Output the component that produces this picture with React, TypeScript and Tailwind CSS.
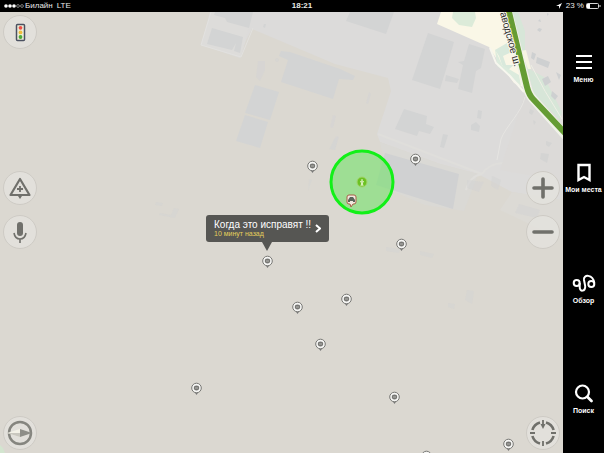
import type { ReactNode } from "react";

const font = "font-['Liberation_Sans',Arial,sans-serif]";

const pins = [
  [312, 166], [415, 159], [401, 244], [267, 261], [297, 307], [346, 299],
  [320, 344], [196, 388], [394, 397], [508, 444], [426, 456],
];

function MapCanvas() {
  return (
    <svg className="absolute inset-0 h-full w-full" aria-hidden="true">
      <g transform="translate(0 -12)">
        <rect x="0" y="12" width="100%" height="100%" fill="#dbd8d1" />
        <path d="M0 445Q5 449 5 456H0Z" fill="#d3e5cf" />

        {/* industrial zones */}
        <path d="M210 12H563V206L535 196L512 192L478 174L440 164L380 142L377 134L391 91L388 78L335 64L252 29L246 40L240 58L201 45Z" fill="#dcdbda" />
        <path d="M201 45L211 12H253L241 57Z" fill="#dddcda" />
        <path d="M201 45L211 12M201 45L241 57L253 28" stroke="#e2e1df" fill="none" />
        <path d="M380 142L440 164L478 174L464 211L425 205L390 190Z" fill="#dad9d5" />
        <path d="M378 134L482 174M482 174Q470 176 466 190M482 174Q488 164 503 163" stroke="#dfdedb" strokeWidth="2" fill="none" />
        <path d="M512 192L563 200V240L500 210Z" fill="#dcdad5" />

        {/* buildings */}
        <g fill="#d3d4d4">
          <path d="M215 12H253L249 28L227 22L225 18L214 15Z" />
          <path d="M212 28L243 37L240 53L234 51L236 43L232 50L207 44Z" />
          <path d="M350 12H394L386 34L346 21Z" />
          <path d="M281 51L290 52L340 69L355 76L353 80L339 79L333 99L281 82L288 60L279 56Z" />
          <path d="M255 85L279 92L270 120L245 113Z" />
          <path d="M245 115L268 122L260 148L236 141Z" />
          <path d="M258 61L265 61L265 70L260 81L256 77Z" opacity=".6" />
          <circle cx="277" cy="60" r="2" opacity=".5" />
          <path d="M264 24L266 24L265 28L263 27Z" />
          <path d="M369 92L371 94L368 104L366 103ZM333 115L336 116L333 128L330 127ZM336 136L339 137L335 150L330 149Z" opacity=".6" />
          <path d="M428 33L454 42L448 63L440 89L412 80Z" />
          <path d="M446 75L459 79L457 83L445 81Z" />
          <path d="M469 44L485 49L481 68L476 71L472 93L458 89L463 65L458 62L464 61Z" />
          <path d="M404 109L427 116L426 124L434 127L430 134L419 131L417 136L395 129Z" />
          <path d="M443 134L448 135L444 148L440 147ZM478 110L482 111L481 119L477 118ZM471 125L476 122L480 126L479 132L471 130Z" />
          <path d="M385 153L459 174L453 209L376 185Z" fill="#d0d1d2" />
          <path d="M334 139L338 137L335 150L329 149ZM309 179L312 180L308 191Z" opacity=".4" />
          <path d="M467 180L484 182L479 192L467 188ZM492 176L501 180L498 190L491 186ZM519 204L540 210L537 218L515 213Z" opacity=".55" />
          <path d="M386 247L400 249L399 253L386 251ZM420 251L434 254L432 258L420 255ZM467 290L474 291L472 304L465 300ZM448 303L455 304L454 309L448 307Z" opacity=".5" />
          <path d="M156 202L163 203L162 206L155 205ZM160 213L171 215L174 208L179 209L175 218L159 215Z" opacity=".5" />
        </g>

        {/* open land and housing on the upper right */}
        <path d="M515 12H563V133L530 93Z" fill="#e2dfdc" />
        <path d="M525 93L563 135V181L500 170Z" fill="#dcdad8" />
        <path d="M441 12H508L520 61L525 88L514 83L496 58L489 47L437 24Z" fill="#faf7e7" />
        <path d="M453 12H475L476 18L472 27L459 25L452 18Z" fill="#dcebd9" />
        <path d="M495 50L507 43L515 64L508 70L502 65L499 56Z" fill="#d9e9dc" />
        <path d="M503 56L514 51L518 65L506 65Z" fill="#f9f6e6" />
        <path d="M495 49L497 66L512 78L521 86L519 75L502 65Z" fill="#dcebdd" />
        <path d="M512 12H518L525 31L525 51L531 70L544 77L562 112L560 120L534 94Z" fill="#d7e6d8" />
        <path d="M521 51L526 50L531 69L528 69Z" fill="#f7f4e3" />
        <path d="M490 48L496 63L510 76L524 92" fill="none" stroke="#f7f6ee" strokeWidth="2" />
        <path d="M525 97C522 112 506 126 501 139L497 160" fill="none" stroke="#e6e5e2" />
        <path d="M531 65Q544 91 562 119" fill="none" stroke="#eeefe5" />
        <g fill="#ced0d1">
          <path d="M537 57L550 62L548 68L536 63ZM542 79L548 76L551 82L545 86ZM552 91L558 96L555 100L551 96ZM532 52L536 54L534 60L531 58ZM556 72L561 75L559 80ZM539 28L542 29L540 32L537 30ZM547 13L549 14L547 16ZM540 19L541 22L538 21Z" />
          <path d="M530 109L534 111L532 115L529 113ZM546 141L552 143L549 147L546 145ZM541 153L549 154L547 163L540 159ZM533 120L536 122L534 125Z" opacity=".6" />
        </g>
        <path d="M507 8L527 87Q529 95 533 99L566 136" fill="none" stroke="#f0f2e8" strokeWidth="9" />
        <path d="M508 8L527 87Q529 95 533 99L566 134" fill="none" stroke="#659c34" strokeWidth="6" />
        <text
          transform="translate(500 13) rotate(75)"
          className={`${font} text-[10px]`}
          fill="#2b2b2b"
          stroke="#f7f6ed"
          strokeWidth="2"
          paintOrder="stroke"
        >
          аводское ш.
        </text>

        {/* accuracy area */}
        <circle cx="362" cy="182" r="31" fill="#6ee264" fillOpacity=".56" stroke="#12f018" strokeWidth="3" />
        <circle cx="362" cy="182" r="5" fill="#6bc222" stroke="#a2d46d" />
        <path d="M362 179V181M360 182L362 181L364 182M361 186L362 182L363 186" fill="none" stroke="#e8f5cf" />
        <path d="M349 195H354Q356 195 356 197V202Q356 204 354 204H353L351 207L350 204H349Q347 204 347 202V197Q347 195 349 195Z" fill="#f1e9df" stroke="#a85f48" />
        <path d="M348 202V200L350 197H353L355 200V202H353V201H350V202Z" fill="#59655b" />

        {pins.map(([x, y]) => (
          <g key={`${x}-${y}`} transform={`translate(${x + 0.5} ${y})`}>
            <path d="M-2 4L0 7L2 4" fill="#777" />
            <circle r="4.8" fill="#f6f6f4" stroke="#777774" />
            <ellipse rx="2.7" ry="2.4" fill="#777774" />
            <path d="M-1.5 0H1.5" stroke="#c5c5c2" strokeWidth=".8" />
          </g>
        ))}
      </g>
    </svg>
  );
}

function RoundButton({ label, children }: { label: string; children: ReactNode }) {
  return (
    <button
      type="button"
      aria-label={label}
      className="flex h-[34px] w-[34px] shrink-0 items-center justify-center rounded-full border border-[#cecbc5] bg-[#e3e2dd]/80 text-[#70706b]"
    >
      <svg width="30" height="30" viewBox="-15 -15 30 30" fill="none" stroke="currentColor" aria-hidden="true">
        {children}
      </svg>
    </button>
  );
}

function LeftControls() {
  return (
    <div className="absolute inset-y-0 left-[3px] flex flex-col py-[3px]">
      <RoundButton label="Пробки">
        <rect x="-3.5" y="-7.5" width="8" height="16" rx="1" fill="#eeeed9" stroke="#4b5161" strokeWidth="1.5" />
        <circle cx=".5" cy="-4.2" r="1.9" fill="#ee5147" stroke="none" />
        <circle cx=".5" cy=".4" r="1.9" fill="#f0bd3b" stroke="none" />
        <circle cx=".5" cy="5" r="1.9" fill="#4eaa38" stroke="none" />
      </RoundButton>
      <div className="flex-[8]" />
      <div className="flex flex-col gap-[10px]">
        <RoundButton label="Добавить событие">
          <path d="M0 -9L9.5 7H-9.5Z" strokeWidth="2.2" strokeLinejoin="round" />
          <path d="M-3 1H3M0 -2V4" strokeWidth="1.8" />
          <path d="M-2 8H2L0 11Z" fill="currentColor" stroke="none" />
        </RoundButton>
        <RoundButton label="Голосовой поиск">
          <rect x="-3" y="-10" width="6" height="14" rx="3" fill="currentColor" stroke="none" />
          <path d="M-6 1Q-5 7 0 7Q5 7 6 1M0 7V11" strokeWidth="1.6" />
        </RoundButton>
      </div>
      <div className="flex-[11]" />
      <RoundButton label="Компас">
        <circle r="11" stroke="#85857f" strokeWidth="2.5" />
        <path d="M-13 0L0 -4V4Z" fill="#f3f1e7" stroke="none" />
        <path d="M0 -4L12 0L0 4Z" fill="#8e8e88" stroke="none" />
        <path d="M-13 0L0 4V0Z" fill="#c9c7bf" stroke="none" />
      </RoundButton>
    </div>
  );
}

function RightControls() {
  return (
    <div className="absolute inset-y-0 right-[3px] flex flex-col py-[3px]">
      <div className="h-[34px]" />
      <div className="flex-[8]" />
      <div className="flex flex-col gap-[10px]">
        <RoundButton label="Приблизить">
          <path d="M-9 0H9M0 -9V9" strokeWidth="3.6" strokeLinecap="round" />
        </RoundButton>
        <RoundButton label="Отдалить">
          <path d="M-9 0H9" strokeWidth="3.6" strokeLinecap="round" />
        </RoundButton>
      </div>
      <div className="flex-[11]" />
      <RoundButton label="Моё местоположение">
        <path d="M3 -10.6A11 11 0 0 1 10.6 -3M10.6 3A11 11 0 0 1 3 10.6M-3 10.6A11 11 0 0 1 -10.6 3M-10.6 -3A11 11 0 0 1 -3 -10.6" strokeWidth="2.6" />
        <path d="M8 0H13M-8 0H-13M0 8V13M0 -13V-6" strokeWidth="1.8" />
        <path d="M-2.5 -9H2.5L0 -4Z" fill="currentColor" stroke="none" />
      </RoundButton>
    </div>
  );
}

function Callout() {
  return (
    <button
      type="button"
      className="absolute left-[206px] top-[203px] flex h-[27px] w-[123px] items-center justify-between rounded-[3px] bg-[#565653] pl-2 pr-2 text-left text-white"
    >
      <span className="flex flex-col whitespace-nowrap">
        <span className="text-[10px] leading-[10px]">Когда это исправят !!</span>
        <span className="text-[7px] leading-[8px] text-[#e5cf5c]">10 минут назад</span>
      </span>
      <svg width="6" height="10" viewBox="0 0 6 10" fill="none" stroke="currentColor" strokeWidth="2" aria-hidden="true">
        <path d="M1 1L5 4.5L1 8" />
      </svg>
      <svg className="absolute left-[56px] top-full" width="10" height="9" aria-hidden="true">
        <path d="M0 0H10L5 9Z" fill="#565653" />
      </svg>
    </button>
  );
}

function NavItem({ label, children }: { label: string; children: ReactNode }) {
  return (
    <button type="button" className="flex flex-1 flex-col items-center justify-center gap-1 pt-[2px] text-white">
      <svg width="24" height="20" viewBox="-12 -10 24 20" fill="none" stroke="currentColor" strokeWidth="2" aria-hidden="true">
        {children}
      </svg>
      <span className="whitespace-nowrap text-[7px] font-bold leading-[8px]">{label}</span>
    </button>
  );
}

function Sidebar() {
  return (
    <nav className="flex w-[41px] shrink-0 flex-col bg-black">
      <NavItem label="Меню">
        <path d="M-8 -6H8M-8 0H8M-8 6H8" />
      </NavItem>
      <NavItem label="Мои места">
        <path d="M-5.5 -7H5.5V8L0 5L-5.5 8Z" strokeWidth="2.4" />
      </NavItem>
      <NavItem label="Обзор">
        <circle cx="-7.3" cy="0" r="3" />
        <circle cx="7.3" cy="1" r="3" />
        <path d="M-4.3 0V4C-4.5 9 1.5 9 1.2 3L0 -3C-1 -9 9 -9 10.3 0" />
      </NavItem>
      <NavItem label="Поиск">
        <circle cx="-1.5" cy="-1" r="6.5" strokeWidth="2.2" />
        <path d="M3.5 4L7.5 8" strokeWidth="2.8" strokeLinecap="round" />
      </NavItem>
    </nav>
  );
}

function StatusBar() {
  return (
    <header className="grid h-3 shrink-0 grid-cols-3 items-center bg-black px-[3px] text-[8px] leading-[12px] text-[#e8e8e8]">
      <div className="flex items-center">
        <svg width="22" height="6" fill="#fff" aria-hidden="true">
          <circle cx="3" cy="3" r="1.8" />
          <circle cx="7" cy="3" r="1.8" />
          <circle cx="11" cy="3" r="1.8" />
          <circle cx="15" cy="3" r="1.4" fill="none" stroke="#aaa" strokeWidth=".7" />
          <circle cx="19" cy="3" r="1.4" fill="none" stroke="#aaa" strokeWidth=".7" />
        </svg>
        <span>Билайн</span>
        <span className="ml-1">LTE</span>
      </div>
      <div className="text-center font-bold">18:21</div>
      <div className="flex items-center justify-end gap-[2px]">
        <svg width="6" height="6" className="mr-[2px]" aria-hidden="true">
          <path d="M0 3L6 0L3 6V3Z" fill="#fff" />
        </svg>
        <span>23 %</span>
        <svg width="15" height="6" aria-hidden="true">
          <rect x=".5" y=".5" width="12" height="5" rx="1" fill="none" stroke="#d5d5d5" />
          <rect x="1" y="1" width="3" height="4" fill="#fff" />
          <path d="M14 2V4" stroke="#d5d5d5" />
        </svg>
      </div>
    </header>
  );
}

export default function App() {
  return (
    <div className={`flex h-screen flex-col overflow-hidden bg-black ${font}`}>
      <StatusBar />
      <div className="flex min-h-0 flex-1">
        <main className="relative min-w-0 flex-1 overflow-hidden bg-[#dbd8d0]">
          <MapCanvas />
          <LeftControls />
          <RightControls />
          <Callout />
        </main>
        <Sidebar />
      </div>
    </div>
  );
}
